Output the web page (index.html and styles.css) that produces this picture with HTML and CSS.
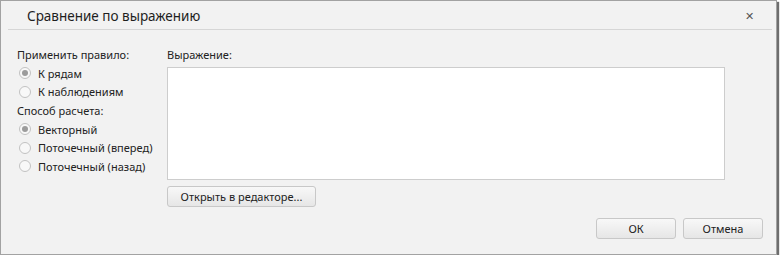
FILE: index.html
```html
<!DOCTYPE html>
<html lang="ru">
  <head>
    <meta charset="UTF-8" />
    <title>Сравнение по выражению</title>
    <link rel="stylesheet" href="styles.css">
  </head>
  <body>
    <div class="dialog">
      <div class="header">
        <span class="title">Сравнение по выражению</span>
        <span class="close">&#x2715;</span>
      </div>

      <div class="content">
        <div class="options">
          <div class="label">Применить правило:</div>
          <label class="radio"><span class="dot checked"></span>К рядам</label>
          <label class="radio"><span class="dot"></span>К наблюдениям</label>
          <div class="label">Способ расчета:</div>
          <label class="radio"><span class="dot checked"></span>Векторный</label>
          <label class="radio"><span class="dot"></span>Поточечный (вперед)</label>
          <label class="radio"><span class="dot"></span>Поточечный (назад)</label>
        </div>
        <div class="expr">
          <div class="label">Выражение:</div>
          <div class="editor"></div>
          <button class="btn open-btn">Открыть в редакторе...</button>
        </div>
      </div>

      <div class="footer">
        <button class="btn">ОК</button>
        <button class="btn">Отмена</button>
      </div>
    </div>
  </body>
</html>
```

FILE: styles.css
```css
* {
    box-sizing: border-box;
    margin: 0;
    padding: 0;
}
body {
    background: #ffffff;
    font-family: "Noto Sans", "Liberation Sans", sans-serif;
    font-size: 11px;
    color: #222;
}
.dialog {
    width: 777px;
    height: 255px;
    background: #f2f2f2;
    border: 1px solid #a2a2a2;
    box-shadow: 2px 2px 1px #6e6e6e;
    display: flex;
    flex-direction: column;
}
.header {
    height: 29px;
    margin: 0 4px 0 7px;
    border-bottom: 1px solid #d6d6d6;
    display: flex;
    align-items: center;
    justify-content: space-between;
}
.title {
    font-size: 13.5px;
    color: #1e1e1e;
    padding-left: 19px;
    padding-top: 1px;
}
.close {
    font-size: 11px;
    color: #555;
    padding-right: 18px;
}

.content {
    display: flex;
    padding: 15px 0 0 16px;
}
.options {
    width: 150px;
    display: flex;
    flex-direction: column;
}
.label {
    height: 19px;
    line-height: 19px;
}
.radio {
    height: 18.5px;
    display: flex;
    align-items: center;
    padding-left: 2px;
}
.dot {
    width: 12px;
    height: 12px;
    border-radius: 50%;
    border: 1px solid #c2c2c2;
    background: #f8f8f8;
    margin-right: 7px;
    display: flex;
    align-items: center;
    justify-content: center;
}
.dot.checked::after {
    content: "";
    width: 6px;
    height: 6px;
    border-radius: 50%;
    background: #9c9c9c;
}

.expr {
    display: flex;
    flex-direction: column;
    align-items: flex-start;
}
.editor {
    width: 558px;
    height: 113px;
    margin-top: 3px;
    background: #fff;
    border: 1px solid #cdcdcd;
}
.btn {
    font-family: "Noto Sans", "Liberation Sans", sans-serif;
    font-size: 11px;
    color: #222;
    height: 21px;
    border: 1px solid #c8c8c8;
    border-radius: 3px;
    background: linear-gradient(#f8f8f8, #e6e6e6);
}
.open-btn {
    width: 149px;
    margin-top: 6px;
}

.footer {
    display: flex;
    justify-content: flex-end;
    gap: 7px;
    padding: 11px 13px 0 0;
}
.footer .btn {
    width: 80px;
}
```
